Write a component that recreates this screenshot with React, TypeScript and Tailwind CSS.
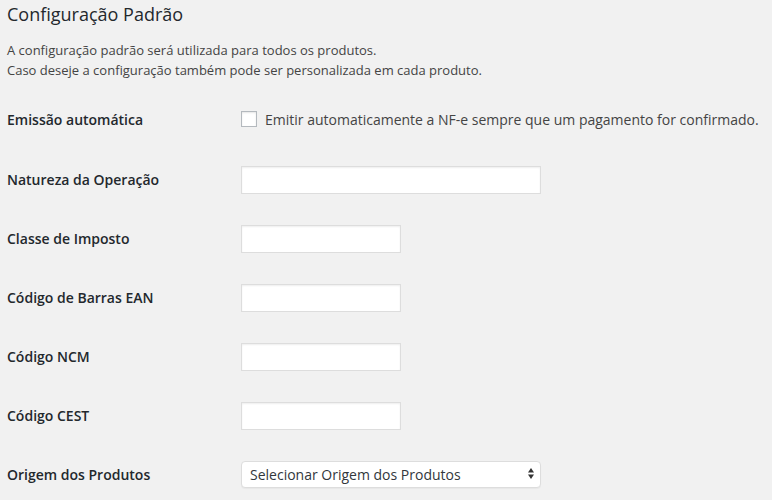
import React from "react";

const fields = [
  { label: "Natureza da Operação", width: "w-[300px]" },
  { label: "Classe de Imposto", width: "w-[160px]" },
  { label: "Código de Barras EAN", width: "w-[160px]" },
  { label: "Código NCM", width: "w-[160px]" },
  { label: "Código CEST", width: "w-[160px]" },
];

const inputCls =
  "h-[28px] rounded-none border border-[#ddd] bg-white px-2 text-[14px] text-[#32373c] shadow-[inset_0_1px_2px_rgba(0,0,0,0.07)] outline-none";

function Row({ label, children, tall }: { label: string; children: React.ReactNode; tall?: boolean }) {
  return (
    <div className={`flex items-center ${tall ? "h-[62px]" : "h-[59px]"}`}>
      <div className="w-[234px] shrink-0 text-[14px] font-semibold text-[#23282d]">{label}</div>
      <div className="flex items-center">{children}</div>
    </div>
  );
}

const App = () => {
  return (
    <div
      className="min-h-screen bg-[#f1f1f1] pl-[7px] pt-[2px]"
      style={{ fontFamily: '"Open Sans", "Liberation Sans", sans-serif' }}
    >
      <h2 className="h-[24px] text-[18px] leading-[24px] font-normal text-[#23282d]">Configuração Padrão</h2>
      <p className="mt-[14px] text-[13px] leading-[20px] text-[#444]">
        A configuração padrão será utilizada para todos os produtos.
        <br />
        Caso deseje a configuração também pode ser personalizada em cada produto.
      </p>

      <div className="mt-[8px]">
        <Row label="Emissão automática" tall>
          <label className="flex items-center gap-[8px] text-[14px] text-[#444]">
            <input
              type="checkbox"
              className="h-[16px] w-[16px] appearance-none border border-[#b4b9be] bg-white shadow-[inset_0_1px_2px_rgba(0,0,0,0.1)]"
            />
            Emitir automaticamente a NF-e sempre que um pagamento for confirmado.
          </label>
        </Row>

        {fields.map((f) => (
          <Row key={f.label} label={f.label}>
            <input type="text" className={`${inputCls} ${f.width}`} />
          </Row>
        ))}

        <Row label="Origem dos Produtos">
          <div className="relative flex h-[27px] w-[300px] items-center rounded-[4px] border border-[#ddd] bg-white pl-[8px] shadow-[0_1px_1px_rgba(0,0,0,0.04)]">
            <span className="text-[14px] text-[#32373c]">Selecionar Origem dos Produtos</span>
            <svg className="absolute right-[6px] top-[6px]" width="6" height="11" viewBox="0 0 6 11">
              <path d="M3 0 L6 4.5 L0 4.5 Z" fill="#333" />
              <path d="M0 6.5 L6 6.5 L3 11 Z" fill="#333" />
            </svg>
          </div>
        </Row>
      </div>
    </div>
  );
};

export default App;
